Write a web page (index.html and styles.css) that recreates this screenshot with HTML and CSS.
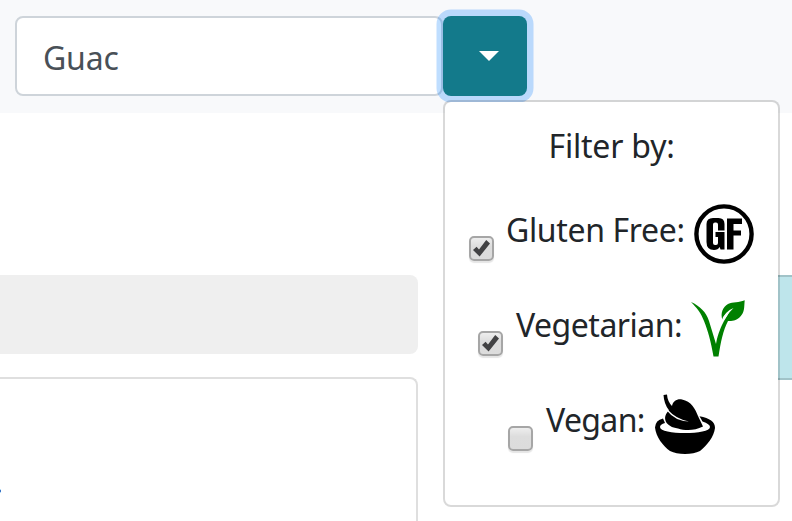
FILE: index.html
```html
<!DOCTYPE html>
<html lang="en">
<head>
<meta charset="utf-8">
<title>Recipes</title>
<link rel="stylesheet" href="styles.css">
</head>
<body>
<nav class="navbar">
  <div class="search">Guac</div>
  <div class="dropdown">
    <button class="toggle" aria-label="Filters"><span class="caret"></span></button>
    <div class="menu">
      <div class="title"><span class="t-filter">Filter by:</span></div>
      <div class="row gluten">
        <span class="check"><svg viewBox="0 0 25 25"><path d="M4 14 7.6 10.8 10 13.4 17.2 4 21 7.4 10.6 20.5Z"/></svg></span>
        <span class="label t-gluten">Gluten Free:</span>
        <svg class="icon" viewBox="0 0 60 60"><circle cx="30" cy="30" r="27.6" fill="none" stroke="#000" stroke-width="4.4"/><path d="M18 14h6.500q6 0 6 6v6.500h-6.500v-6q0-2-2-2h-1q-2 0-2 2v18.500q0 2 2 2h1q2 0 2-2v-6h-2.500v-5h9v17.500h-4l-.8-2.500q-1.700 3-5.700 3-7.500 0-7.500-8V20q0-6 6.500-6Z"/><path d="M33 14.600H48v5.400h-8.500v6.500h7.500v5.100h-7.500v14H33Z"/></svg>
      </div>
      <div class="row vegetarian">
        <span class="check"><svg viewBox="0 0 25 25"><path d="M4 14 7.6 10.8 10 13.4 17.2 4 21 7.4 10.6 20.5Z"/></svg></span>
        <span class="label t-vegetarian">Vegetarian:</span>
        <svg class="icon green" viewBox="0 0 60 60"><path d="M1 3C10 7 16 13 19 22L26 45C28 34 31 28 34 22L40 12C34 15 32 19 32.5 21C30 14 33 8 38 5C43 2.500 49 4 54.700 1.300C54 8 55 13 50 18C46 22 42 22 38 22C33 32 31 42 28.500 57.500H23.500C21 43 18 32 14 22C11 14 7 9 1 3Z"/><path class="vein" d="M32.500 21.500Q35 12 43.500 9Q38.500 13.500 34.800 20Z"/></svg>
      </div>
      <div class="row vegan">
        <span class="check"></span>
        <span class="label t-vegan">Vegan:</span>
        <svg class="icon" viewBox="0 0 60 60"><path d="M8.500 1 12 .4Q12.400 7 17 12C18 7 22 4.600 27 5.400C36 7 40.500 15 43 22L48 32.500C40 36.500 31 37 23 34.500C11 33 6 24 14 16.300Q9 10 8.500 1Z"/><path class="stem" d="M13 16Q21 25 34 27.500Q20 27 12.300 17Z"/><path d="M8 24.400 10 29Q5 30.500 5 33C5 37 17 39 30 39S55 37 55 33Q55 30 47.500 27.500L44.500 22.300Q60 25 60 34C59 43 52 51 45 57Q39 60 30 60T15 57C8 52 1 43 0 33.500Q.500 26 8 24.400Z"/></svg>
      </div>
    </div>
  </div>
</nav>
<main class="content">
  <section class="left">
    <div class="heading"></div>
    <div class="card"><span class="link-end"></span></div>
  </section>
  <aside class="notice"></aside>
</main>
</body>
</html>
```
FILE: styles.css
```css
* { box-sizing: border-box; }
body { margin: 0; height: 521px; overflow: hidden; background: #fff; color: #212529; font-family: "Noto Sans", "Open Sans", sans-serif; font-size: 32px; line-height: 50px; }
.navbar { display: flex; height: 113px; padding: 16px 0 0 15px; background: #f8f9fb; }
.search { width: 428px; height: 80px; padding: 15px 26px 0; border: 2px solid #ced4da; border-radius: 8px; background: #fff; color: #495057; letter-spacing: -.2px; }
.dropdown { position: relative; width: 84px; height: 80px; }
.toggle { display: flex; align-items: center; justify-content: center; width: 84px; height: 80px; padding: 0 0 0 8px; border: 0; border-radius: 8px; background: #137a8b; box-shadow: 0 0 0 6.5px rgba(0, 123, 255, .25); }
.caret { border-top: 10px solid #fff; border-left: 10px solid transparent; border-right: 10px solid transparent; }
.menu { position: absolute; z-index: 2; top: 84px; left: 0; width: 337px; height: 407px; padding-top: 19px; border: 2px solid rgba(0, 0, 0, .15); border-radius: 8px; background: #fff; background-clip: padding-box; }
.title { height: 83px; padding: 0 0 0 103.5px; white-space: nowrap; letter-spacing: -.2px; }
.row { display: flex; height: 95px; white-space: nowrap; }
.gluten { padding-left: 24px; }
.vegetarian { padding-left: 33px; }
.vegan { padding-left: 63px; }
.check { flex: none; width: 25px; height: 25px; margin: 32px 12px 0 0; border: 2px solid #a6a6a6; border-radius: 5px; background: linear-gradient(#eee, #ddd 40%, #dcdcdc); box-shadow: 0 2px 1px rgba(0, 0, 0, .1); }
.check svg { display: block; width: 25px; height: 25px; margin: -2px; fill: #424244; }
.label { flex: none; padding-top: 1px; }
.t-gluten { width: 188px; letter-spacing: -.35px; }
.t-vegetarian { width: 175px; padding-left: 1px; letter-spacing: -.5px; }
.t-vegan { width: 110px; padding-left: 1px; letter-spacing: -.65px; }
.icon { flex: none; width: 60px; height: 60px; }
.green { fill: #008000; }
.vein, .stem { fill: #fff; }
.content { display: flex; justify-content: space-between; height: 408px; padding-top: 162px; }
.left { width: 418px; }
.heading { height: 79px; margin-bottom: 23px; border-radius: 0 8px 8px 0; background: #efefef; }
.card { height: 144px; padding-top: 110px; border: solid #dfdfdf; border-width: 2px 2px 0 0; border-radius: 0 8px 0 0; }
.link-end { display: block; width: 1px; height: 4px; border: solid #b5dcf8; border-width: 1px 0; background: #3b73c4; }
.notice { width: 60px; height: 105px; border: 2px solid #a1c3c8; border-width: 2px 0; background: #bee5eb; }
```
